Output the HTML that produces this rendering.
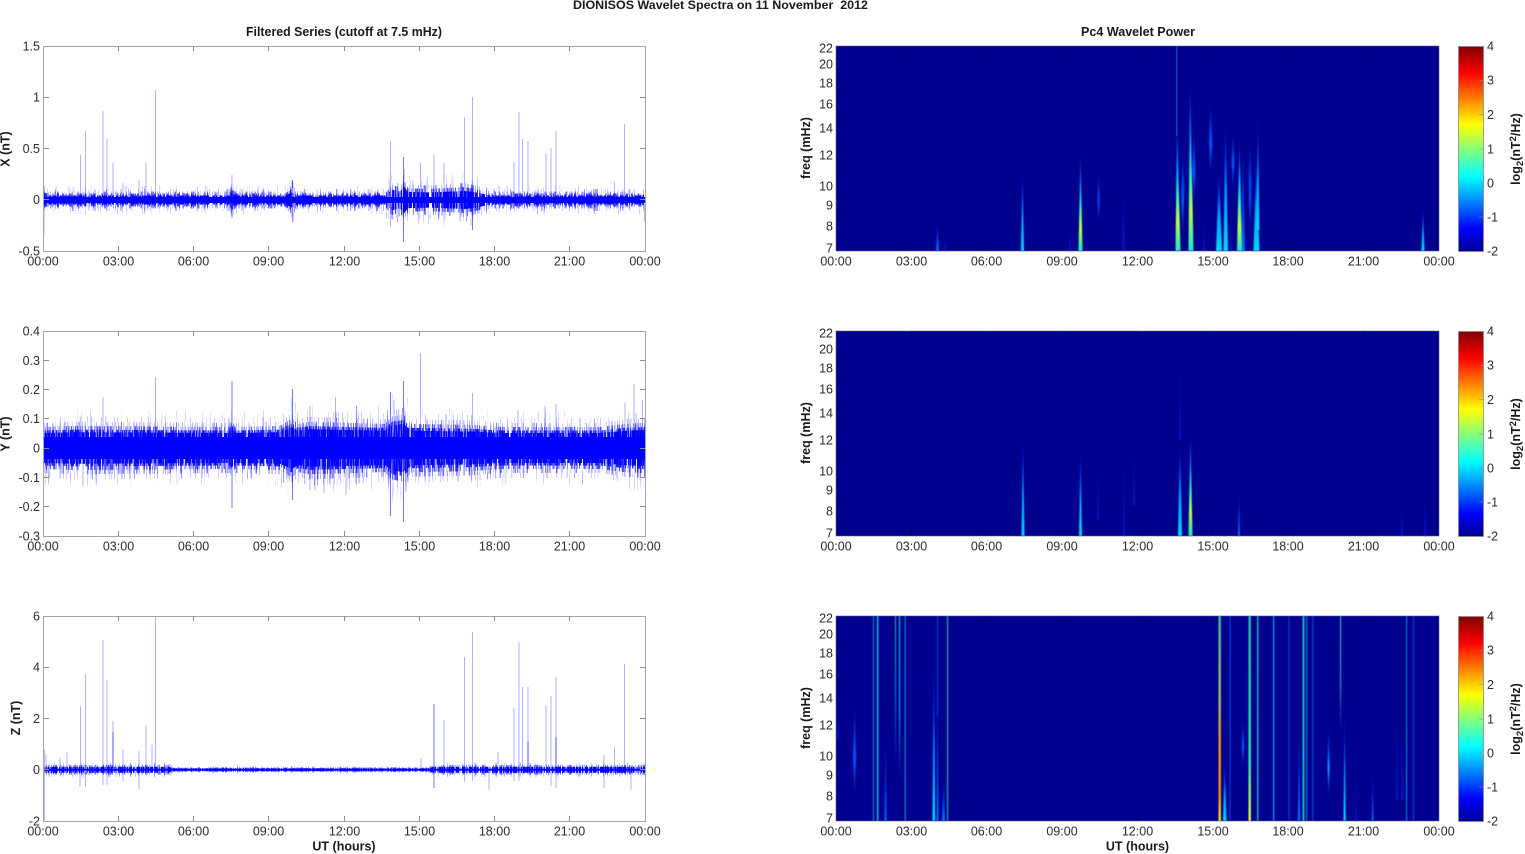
<!DOCTYPE html>
<html><head><meta charset="utf-8"><title>DIONISOS Wavelet Spectra</title>
<style>
html,body{margin:0;padding:0;background:#fff;width:1525px;height:854px;overflow:hidden}
svg{display:block;font-family:"Liberation Sans",Arial,sans-serif}
.t{font-size:12.5px;fill:#2c2c2c}
.b{font-size:12.5px;font-weight:bold;fill:#1a1a1a}
.box{fill:none;stroke:#a6a6a6;stroke-width:1}
.tick{stroke:#8c8c8c;stroke-width:1;fill:none}
.sp{stroke:#0000ff;stroke-opacity:.3;stroke-width:1;fill:none}
.sd{stroke:#0000ff;stroke-opacity:.55;stroke-width:1;fill:none}
</style></head><body>
<svg xmlns="http://www.w3.org/2000/svg" width="1525" height="854" viewBox="0 0 1525 854">
<defs>
<filter id="f1" x="0" y="0" width="1" height="1" color-interpolation-filters="sRGB"><feTurbulence type="fractalNoise" baseFrequency="0.85 0.012" numOctaves="2" seed="3"/><feColorMatrix type="matrix" values="0 0 0 0 0 0 0 0 0 0 0 0 0 0 0 14 0 0 0 -5.6"/><feComposite in="SourceGraphic" operator="in"/></filter>
<filter id="f2" x="0" y="0" width="1" height="1" color-interpolation-filters="sRGB"><feTurbulence type="fractalNoise" baseFrequency="0.75 0.012" numOctaves="2" seed="11"/><feColorMatrix type="matrix" values="0 0 0 0 0 0 0 0 0 0 0 0 0 0 0 14 0 0 0 -6.4"/><feComposite in="SourceGraphic" operator="in"/></filter>
<filter id="f3" x="0" y="0" width="1" height="1" color-interpolation-filters="sRGB"><feTurbulence type="fractalNoise" baseFrequency="0.9 0.012" numOctaves="2" seed="23"/><feColorMatrix type="matrix" values="0 0 0 0 0 0 0 0 0 0 0 0 0 0 0 14 0 0 0 -7.3"/><feComposite in="SourceGraphic" operator="in"/></filter>
<filter id="f4" x="0" y="0" width="1" height="1" color-interpolation-filters="sRGB"><feTurbulence type="fractalNoise" baseFrequency="0.8 0.012" numOctaves="2" seed="37"/><feColorMatrix type="matrix" values="0 0 0 0 0 0 0 0 0 0 0 0 0 0 0 14 0 0 0 -8.1"/><feComposite in="SourceGraphic" operator="in"/></filter>
<filter id="f5" x="0" y="0" width="1" height="1" color-interpolation-filters="sRGB"><feTurbulence type="fractalNoise" baseFrequency="0.7 0.012" numOctaves="2" seed="51"/><feColorMatrix type="matrix" values="0 0 0 0 0 0 0 0 0 0 0 0 0 0 0 14 0 0 0 -8.9"/><feComposite in="SourceGraphic" operator="in"/></filter>
<filter id="f6" x="0" y="0" width="1" height="1" color-interpolation-filters="sRGB"><feTurbulence type="fractalNoise" baseFrequency="0.85 0.012" numOctaves="2" seed="67"/><feColorMatrix type="matrix" values="0 0 0 0 0 0 0 0 0 0 0 0 0 0 0 14 0 0 0 -9.6"/><feComposite in="SourceGraphic" operator="in"/></filter>
<filter id="soft" x="-1%" y="-1%" width="102%" height="102%" color-interpolation-filters="sRGB"><feGaussianBlur stdDeviation="0.3"/></filter>
<filter id="hb" x="-2%" y="-2%" width="104%" height="104%" color-interpolation-filters="sRGB"><feGaussianBlur stdDeviation="0.65 0.5"/></filter>
<filter id="lb" x="-2%" y="-2%" width="104%" height="104%" color-interpolation-filters="sRGB"><feGaussianBlur stdDeviation="0.4 0"/></filter>
<linearGradient id="gA" x1="0" y1="1" x2="0" y2="0"><stop offset="0" stop-color="#18e8c0"/><stop offset=".22" stop-color="#b8ff48"/><stop offset=".42" stop-color="#30f0c0"/><stop offset=".65" stop-color="#0090ff"/><stop offset="1" stop-color="#00008f"/></linearGradient>
<linearGradient id="gB" x1="0" y1="1" x2="0" y2="0"><stop offset="0" stop-color="#00d8f8"/><stop offset=".45" stop-color="#0098ff"/><stop offset=".75" stop-color="#0030e8"/><stop offset="1" stop-color="#00008f"/></linearGradient>
<linearGradient id="gC" x1="0" y1="1" x2="0" y2="0"><stop offset="0" stop-color="#0070ff"/><stop offset=".5" stop-color="#0030e8"/><stop offset="1" stop-color="#00008f"/></linearGradient>
<linearGradient id="gD" x1="0" y1="1" x2="0" y2="0"><stop offset="0" stop-color="#0018c8"/><stop offset="1" stop-color="#00008f"/></linearGradient>
<linearGradient id="gMB" x1="0" y1="1" x2="0" y2="0"><stop offset="0" stop-color="#00008f"/><stop offset=".4" stop-color="#0098ff"/><stop offset=".7" stop-color="#0040e8"/><stop offset="1" stop-color="#00008f"/></linearGradient>
<linearGradient id="gMC" x1="0" y1="1" x2="0" y2="0"><stop offset="0" stop-color="#000090"/><stop offset=".4" stop-color="#0058ff"/><stop offset="1" stop-color="#00008f"/></linearGradient>
<linearGradient id="gO" x1="0" y1="1" x2="0" y2="0"><stop offset="0" stop-color="#f0f020"/><stop offset=".13" stop-color="#ff9000"/><stop offset=".35" stop-color="#ff9010"/><stop offset=".6" stop-color="#a8c060"/><stop offset="1" stop-color="#40c0a0"/></linearGradient>
<linearGradient id="gL" x1="0" y1="1" x2="0" y2="0"><stop offset="0" stop-color="#f0ff30"/><stop offset=".3" stop-color="#30e8b0"/><stop offset="1" stop-color="#28c0a0"/></linearGradient>
<linearGradient id="gF1" x1="0" y1="1" x2="0" y2="0"><stop offset="0" stop-color="#00008f"/><stop offset=".5" stop-color="#0088e0"/><stop offset="1" stop-color="#30b090"/></linearGradient>
<linearGradient id="gF2" x1="0" y1="1" x2="0" y2="0"><stop offset="0" stop-color="#00008f"/><stop offset=".4" stop-color="#18a8d8"/><stop offset="1" stop-color="#28c8a8"/></linearGradient>
<linearGradient id="jet" x1="0" y1="1" x2="0" y2="0"><stop offset="0" stop-color="#00008f"/><stop offset=".111" stop-color="#0000ff"/><stop offset=".365" stop-color="#00ffff"/><stop offset=".62" stop-color="#ffff00"/><stop offset=".87" stop-color="#ff0000"/><stop offset="1" stop-color="#800000"/></linearGradient>
<path id="eX" fill="#00f" d="M43 -1.2L48 -1L230 -1L232 -1.6L235 -1L285 -1L292 -1.7L298 -1L385 -1L392 -2.3L400 -1.9L404 -3L408 -1.8L430 -1.7L465 -2L478 -1.6L490 -1L640 -1L645 -1.3L645 1.3L640 1L490 1L478 1.6L465 2L430 1.7L408 1.8L404 3L400 1.9L392 2.3L385 1L298 1L292 1.7L285 1L235 1L232 1.6L230 1L48 1L43 1.2Z"/>
<path id="eY" fill="#00f" d="M43 -1L75 -1.05L230 -1L232 -1.3L235 -1L280 -1.05L292 -1.4L298 -1.15L310 -1.25L345 -1.2L385 -1.15L392 -1.5L403 -1.6L412 -1.15L470 -1.1L500 -1L600 -1L625 -1.15L645 -1.2L645 1.2L625 1.15L600 1L500 1L470 1.1L412 1.15L403 1.6L392 1.5L385 1.15L345 1.2L310 1.25L298 1.15L292 1.4L280 1.05L235 1L232 1.3L230 1L75 1.05L43 1Z"/>
<path id="eZ" fill="#00f" d="M43 -1L168 -1L174 -.5L428 -.5L434 -1L645 -1L645 1L434 1L428 .5L174 .5L168 1L43 1Z"/>
</defs>

<!-- titles -->
<text class="b" x="573" y="9" textLength="295" lengthAdjust="spacingAndGlyphs" style="font-size:11.5px">DIONISOS Wavelet Spectra on 11 November&#160;&#160;2012</text>
<text class="b" x="246" y="36" textLength="196" lengthAdjust="spacingAndGlyphs">Filtered Series (cutoff at 7.5 mHz)</text>
<text class="b" x="1081" y="36" textLength="114" lengthAdjust="spacingAndGlyphs">Pc4 Wavelet Power</text>

<g filter="url(#soft)">
<!-- ===== X panel ===== -->
<g filter="url(#f6)" opacity=".35"><use href="#eX" transform="translate(0 200) scale(1 14)"/></g>
<g filter="url(#f5)" opacity=".4"><use href="#eX" transform="translate(0 200) scale(1 11)"/></g>
<g filter="url(#f4)" opacity=".55"><use href="#eX" transform="translate(0 200) scale(1 8.500)"/></g>
<g filter="url(#f3)" opacity=".75"><use href="#eX" transform="translate(0 200) scale(1 6.500)"/></g>
<g filter="url(#f1)"><use href="#eX" transform="translate(0 200) scale(1 4.500)"/></g>
<rect x="43" y="197" width="602" height="6" fill="#00f"/>

<!-- ===== Y panel ===== -->
<g filter="url(#f6)" opacity=".35"><use href="#eY" transform="translate(0 448) scale(1 36)"/></g>
<g filter="url(#f5)" opacity=".4"><use href="#eY" transform="translate(0 448) scale(1 30)"/></g>
<g filter="url(#f4)" opacity=".5"><use href="#eY" transform="translate(0 448) scale(1 25)"/></g>
<g filter="url(#f3)" opacity=".65"><use href="#eY" transform="translate(0 448) scale(1 21)"/></g>
<g filter="url(#f2)" opacity=".85"><use href="#eY" transform="translate(0 448) scale(1 17.500)"/></g>
<g filter="url(#f1)"><use href="#eY" transform="translate(0 448) scale(1 15)"/></g>
<rect x="43" y="437" width="602" height="22" fill="#00f"/>

<!-- ===== Z panel ===== -->
<g filter="url(#f5)" opacity=".4"><use href="#eZ" transform="translate(0 769.700) scale(1 7)"/></g>
<g filter="url(#f3)" opacity=".6"><use href="#eZ" transform="translate(0 769.700) scale(1 4.800)"/></g>
<g filter="url(#f1)"><use href="#eZ" transform="translate(0 769.700) scale(1 3)"/></g>
<rect x="43" y="768.700" width="602" height="2" fill="#00f"/>
</g>

<!-- spikes -->
<path class="sp" d="M80.500 155V195M85.500 131V195M103 111V195M107 139V195M113 163V195M123 183V195M139 180V195M146 163V195M155.500 90V195M232 175V218M292.500 180V222M390.500 141V227M420.500 163V195M434 155V195M444 163V195M464.500 117V195M472.500 97V195M514 162V195M519 112V195M522.500 139V195M528 141V195M546 153V195M551 148V195M556 131V195M624.500 124V195M614.500 182V195M44 205V235"/>
<path class="sd" d="M403.500 157V242M472.500 205V230M44 186V195M645 205V222M292.500 180V188"/>
<path class="sp" d="M103 397V433M155.500 377V433M420.500 353V433M472.500 393V433M394 400V433M335.500 397V433M634 384V433M642.500 400V433M625 403V463M310 406V490M315 463V491M324 463V493M346 463V495M356.500 406V485M83 463V486M518 410V433M545 406V433M556 404V433"/>
<path class="sd" d="M232 381V508M292.500 389V500M403.500 381V522M390.500 392V516"/>
<path class="sp" d="M80.500 706V768M85.500 674V768M103 640V768M107 680V768M113 721V768M123 749V768M139 751V789M146 725V768M152 745V768M155.500 616V768M46 755V768M60 758V768M67 752V768M444 720V768M464.500 657V768M472.500 632V768M514 708V768M519 642V768M522.500 687V768M528 687V768M546 705V768M551 696V768M556 677V768M624.500 664V768M614.500 747V768M604 772V788M631 772V790M489 772V790M421 758V768M80 772V787M85.500 772V787M103 772V785M107 772V785M123 772V781M551 772V786M556 772V788M464.500 772V782M472.500 772V781M514 772V781M519 772V781M498 752V768M604 755V768"/>
<path class="sd" d="M44 750V820M434 704V788M113 732V768M528 742V768M556 737V768"/>

<!-- left axes boxes + ticks -->
<g id="L">
<rect class="box" x="43.5" y="46.5" width="602" height="205"/>
<rect class="box" x="43.5" y="331.5" width="602" height="205"/>
<rect class="box" x="43.5" y="616.5" width="602" height="205"/>
<path class="tick" d="M118.5 46v5M193.5 46v5M268.5 46v5M344.5 46v5M419.5 46v5M494.5 46v5M569.5 46v5M118.5 251v-5M193.5 251v-5M268.5 251v-5M344.5 251v-5M419.5 251v-5M494.5 251v-5M569.5 251v-5
M44 97.5h5M44 148.5h5M44 199.5h5M645 97.5h-5M645 148.5h-5M645 199.5h-5
M118.5 331v5M193.5 331v5M268.5 331v5M344.5 331v5M419.5 331v5M494.5 331v5M569.5 331v5M118.5 536v-5M193.5 536v-5M268.5 536v-5M344.5 536v-5M419.5 536v-5M494.5 536v-5M569.5 536v-5
M44 360.5h5M44 389.5h5M44 418.5h5M44 448.5h5M44 477.5h5M44 506.5h5M645 360.5h-5M645 389.5h-5M645 418.5h-5M645 448.5h-5M645 477.5h-5M645 506.5h-5
M118.5 616v5M193.5 616v5M268.5 616v5M344.5 616v5M419.5 616v5M494.5 616v5M569.5 616v5M118.5 821v-5M193.5 821v-5M268.5 821v-5M344.5 821v-5M419.5 821v-5M494.5 821v-5M569.5 821v-5
M44 667.5h5M44 718.5h5M44 769.5h5M645 667.5h-5M645 718.5h-5M645 769.5h-5"/>
</g>

<!-- left y labels -->
<g class="t" text-anchor="end">
<text x="40" y="50.500">1.5</text><text x="40" y="101.500">1</text><text x="40" y="153">0.5</text><text x="40" y="204">0</text><text x="40" y="255.500">-0.5</text>
<text x="40" y="335.500">0.4</text><text x="40" y="365">0.3</text><text x="40" y="394">0.2</text><text x="40" y="423">0.1</text><text x="40" y="452.500">0</text><text x="40" y="482">-0.1</text><text x="40" y="511">-0.2</text><text x="40" y="540.500">-0.3</text>
<text x="40" y="620.500">6</text><text x="40" y="671.500">4</text><text x="40" y="723">2</text><text x="40" y="774">0</text><text x="40" y="825.500">-2</text>
</g>
<!-- x labels left -->
<g class="t" text-anchor="middle">
<text x="43" y="265.500">00:00</text><text x="118.500" y="265.500">03:00</text><text x="193.500" y="265.500">06:00</text><text x="268.500" y="265.500">09:00</text><text x="344.500" y="265.500">12:00</text><text x="419.500" y="265.500">15:00</text><text x="494.500" y="265.500">18:00</text><text x="569.500" y="265.500">21:00</text><text x="645" y="265.500">00:00</text>
<text x="43" y="550.500">00:00</text><text x="118.500" y="550.500">03:00</text><text x="193.500" y="550.500">06:00</text><text x="268.500" y="550.500">09:00</text><text x="344.500" y="550.500">12:00</text><text x="419.500" y="550.500">15:00</text><text x="494.500" y="550.500">18:00</text><text x="569.500" y="550.500">21:00</text><text x="645" y="550.500">00:00</text>
<text x="43" y="835.500">00:00</text><text x="118.500" y="835.500">03:00</text><text x="193.500" y="835.500">06:00</text><text x="268.500" y="835.500">09:00</text><text x="344.500" y="835.500">12:00</text><text x="419.500" y="835.500">15:00</text><text x="494.500" y="835.500">18:00</text><text x="569.500" y="835.500">21:00</text><text x="645" y="835.500">00:00</text>
</g>
<text class="b" x="344" y="850.500" text-anchor="middle">UT (hours)</text>
<text class="b" x="1137.500" y="850.500" text-anchor="middle">UT (hours)</text>
<text class="b" text-anchor="middle" transform="translate(9.500 149) rotate(-90)">X (nT)</text>
<text class="b" text-anchor="middle" transform="translate(9.500 434) rotate(-90)">Y (nT)</text>
<text class="b" text-anchor="middle" transform="translate(20 718) rotate(-90)">Z (nT)</text>

<!-- ===== right panels background ===== -->
<rect x="836" y="46" width="603" height="205" fill="#00008f"/>
<rect x="836" y="331" width="603" height="205" fill="#00008f"/>
<rect x="836" y="616" width="603" height="205" fill="#00008f"/>

<!-- spectra 1 -->
<g filter="url(#hb)">
<g fill="url(#gD)"><polygon points="944,251 945,233 946,251"/><polygon points="1069,251 1070,226 1071,251"/><polygon points="1122,251 1123.500,183 1125,251"/><polygon points="1203,251 1204,213 1205,251"/><polygon points="1230,251 1231,205 1232,251"/></g>
<g fill="url(#gMC)"><polygon points="1098.700,225 1097.500,195 1098.700,173 1099.900,195"/><polygon points="1210.700,178 1209,140 1210.700,100 1212.400,140"/><polygon points="1182.700,240 1181,190 1182.700,147 1184.400,190"/><polygon points="1194,207 1192.500,170 1194,123 1195.500,170"/><polygon points="1233,190 1231.500,160 1233,130 1234.500,160"/><polygon points="1250,240 1248.600,180 1250,137 1251.400,180"/></g>
<g fill="url(#gC)"><polygon points="936,251 937.500,220 939,251"/><polygon points="1241.500,251 1243,140 1245,251"/></g>
<g fill="url(#gB)"><polygon points="1021,251 1022.500,167 1024,251"/><polygon points="1421.500,251 1423,207 1424.500,251"/><polygon points="1216,251 1219,170 1222,251"/><polygon points="1223.500,251 1225.500,117 1228,251"/><polygon points="1253.500,251 1256.500,157 1259.500,251"/><polygon points="1256.500,230 1258,113 1259.500,230"/></g>
<g fill="url(#gA)"><polygon points="1175.500,251 1177,120 1180.500,251"/><polygon points="1188.500,251 1190,77 1193.500,251"/><polygon points="1237,251 1239.500,137 1242,251"/><polygon points="1078.500,251 1080.500,150 1082.500,251"/></g>
</g>
<rect x="1176.200" y="46" width="1" height="90" fill="#0a80d8" filter="url(#lb)"/>

<!-- spectra 2 -->
<g filter="url(#hb)">
<g fill="url(#gD)"><polygon points="1179,440 1180,350 1181,440"/><polygon points="1097,520 1098,460 1099,520"/><polygon points="1123,536 1124,445 1125,536"/><polygon points="1133,505 1134,440 1135,505"/><polygon points="1401,536 1402,500 1403,536"/><polygon points="1424,536 1425,490 1426,536"/></g>
<g fill="url(#gC)"><polygon points="1238,536 1239,487 1240,536"/></g>
<g fill="url(#gB)"><polygon points="1021.500,536 1023,435 1024.500,536"/><polygon points="1079,536 1080.500,445 1082,536"/><polygon points="1178,536 1180,440 1182,536"/></g>
<g fill="url(#gA)"><polygon points="1188.500,536 1190.500,430 1192.500,536"/></g>
</g>

<!-- spectra 3 -->
<g filter="url(#hb)">
<g fill="url(#gD)"><polygon points="1396,800 1397,700 1398,800"/><polygon points="1401.500,800 1402.600,715 1403.700,800"/><polygon points="1355,821 1355.800,765 1356.600,821"/><polygon points="837,740 838,690 839,740"/></g>
<g fill="url(#gMC)"><polygon points="854.600,800 853,755 854.600,700 856.200,755"/><polygon points="1243,770 1241.800,745 1243,716 1244.200,745"/></g>
<g fill="url(#gMB)"><polygon points="1328.600,800 1327.400,765 1328.600,725 1329.800,765"/></g>
<g fill="url(#gC)"><polygon points="884.500,821 885.500,730 886.500,821"/><polygon points="936.500,821 937.500,680 938.500,821"/><polygon points="942,821 943.600,775 945,821"/><polygon points="1371.800,821 1372.700,770 1373.600,821"/><polygon points="1297.800,821 1299,716 1300.200,821"/></g>
<g fill="url(#gB)"><polygon points="932.500,821 933.800,660 935.200,821"/><polygon points="1223,821 1224.700,760 1226.500,821"/><polygon points="1343.500,821 1344.600,710 1345.800,821"/></g>
</g>
<g filter="url(#lb)">
<rect x="1229.500" y="616" width="1" height="205" fill="#0048e0"/>
<rect x="1288.500" y="616" width="1" height="205" fill="#0048e0"/>
<rect x="1312.300" y="616" width="1" height="205" fill="#0058e8"/>
<rect x="1413" y="616" width="1" height="205" fill="#0050e0"/>
<rect x="937" y="616" width="1" height="100" fill="#0040d8"/>
<rect x="873" y="616" width="1" height="205" fill="#1090d0"/>
<rect x="876.800" y="616" width="1.700" height="205" fill="#18a8d0"/>
<rect x="895" y="616" width="1" height="150" fill="url(#gF1)"/>
<rect x="899" y="616" width="1.100" height="160" fill="url(#gF2)"/>
<rect x="904.700" y="616" width="1" height="205" fill="#1098c8"/>
<rect x="947" y="616" width="1.100" height="205" fill="#20c0a0"/>
<rect x="1218.500" y="616" width="2.400" height="205" fill="url(#gO)"/>
<rect x="1248.500" y="616" width="2.400" height="205" fill="url(#gL)"/>
<rect x="1257" y="616" width="1.400" height="205" fill="#20b8b0"/>
<rect x="1273" y="616" width="1.300" height="205" fill="#1098e0"/>
<rect x="1302.500" y="616" width="2" height="205" fill="#20b8b8"/>
<rect x="1306" y="616" width="1.200" height="205" fill="#0880e0"/>
<rect x="1340" y="616" width="1.100" height="115" fill="url(#gF2)"/>
<rect x="1406" y="616" width="1.100" height="205" fill="#1088d0"/>
</g>

<!-- right boxes + ticks -->
<rect x="836" y="46" width="603" height="205" fill="none" stroke="#5a5a9a" stroke-width=".6"/>
<rect x="836" y="331" width="603" height="205" fill="none" stroke="#5a5a9a" stroke-width=".6"/>
<rect x="836" y="616" width="603" height="205" fill="none" stroke="#5a5a9a" stroke-width=".6"/>
<path stroke="#000" stroke-opacity=".35" stroke-width="1" fill="none" d="M911.500 46v5M986.500 46v5M1062 46v5M1137.500 46v5M1213 46v5M1288 46v5M1363.500 46v5M911.500 251v-5M986.500 251v-5M1062 251v-5M1137.500 251v-5M1213 251v-5M1288 251v-5M1363.500 251v-5
M911.500 331v5M986.500 331v5M1062 331v5M1137.500 331v5M1213 331v5M1288 331v5M1363.500 331v5M911.500 536v-5M986.500 536v-5M1062 536v-5M1137.500 536v-5M1213 536v-5M1288 536v-5M1363.500 536v-5
M911.500 616v5M986.500 616v5M1062 616v5M1137.500 616v5M1213 616v5M1288 616v5M1363.500 616v5M911.500 821v-5M986.500 821v-5M1062 821v-5M1137.500 821v-5M1213 821v-5M1288 821v-5M1363.500 821v-5"/>

<!-- freq labels -->
<g class="t" text-anchor="end">
<text x="833" y="52.500">22</text><text x="833" y="68.500">20</text><text x="833" y="87.500">18</text><text x="833" y="108.500">16</text><text x="833" y="132.500">14</text><text x="833" y="159.500">12</text><text x="833" y="190.500">10</text><text x="833" y="209.500">9</text><text x="833" y="230.500">8</text><text x="833" y="252.500">7</text>
<text x="833" y="337.500">22</text><text x="833" y="353.500">20</text><text x="833" y="372.500">18</text><text x="833" y="393.500">16</text><text x="833" y="417.500">14</text><text x="833" y="444.500">12</text><text x="833" y="475.500">10</text><text x="833" y="494.500">9</text><text x="833" y="515.500">8</text><text x="833" y="537.500">7</text>
<text x="833" y="622.500">22</text><text x="833" y="638.500">20</text><text x="833" y="657.500">18</text><text x="833" y="678.500">16</text><text x="833" y="702.500">14</text><text x="833" y="729.500">12</text><text x="833" y="760.500">10</text><text x="833" y="779.500">9</text><text x="833" y="800.500">8</text><text x="833" y="822.500">7</text>
</g>
<!-- right x labels -->
<g class="t" text-anchor="middle">
<text x="836" y="265.500">00:00</text><text x="911.500" y="265.500">03:00</text><text x="986.500" y="265.500">06:00</text><text x="1062" y="265.500">09:00</text><text x="1137.500" y="265.500">12:00</text><text x="1213" y="265.500">15:00</text><text x="1288" y="265.500">18:00</text><text x="1363.500" y="265.500">21:00</text><text x="1439" y="265.500">00:00</text>
<text x="836" y="550.500">00:00</text><text x="911.500" y="550.500">03:00</text><text x="986.500" y="550.500">06:00</text><text x="1062" y="550.500">09:00</text><text x="1137.500" y="550.500">12:00</text><text x="1213" y="550.500">15:00</text><text x="1288" y="550.500">18:00</text><text x="1363.500" y="550.500">21:00</text><text x="1439" y="550.500">00:00</text>
<text x="836" y="835.500">00:00</text><text x="911.500" y="835.500">03:00</text><text x="986.500" y="835.500">06:00</text><text x="1062" y="835.500">09:00</text><text x="1137.500" y="835.500">12:00</text><text x="1213" y="835.500">15:00</text><text x="1288" y="835.500">18:00</text><text x="1363.500" y="835.500">21:00</text><text x="1439" y="835.500">00:00</text>
</g>
<text class="b" text-anchor="middle" transform="translate(810 148) rotate(-90)">freq (mHz)</text>
<text class="b" text-anchor="middle" transform="translate(810 433) rotate(-90)">freq (mHz)</text>
<text class="b" text-anchor="middle" transform="translate(810 718) rotate(-90)">freq (mHz)</text>

<!-- colorbars -->
<rect x="1458.500" y="46.500" width="25" height="205" fill="url(#jet)" stroke="#8a8a8a" stroke-width=".8"/>
<rect x="1458.500" y="331.500" width="25" height="205" fill="url(#jet)" stroke="#8a8a8a" stroke-width=".8"/>
<rect x="1458.500" y="616.500" width="25" height="205" fill="url(#jet)" stroke="#8a8a8a" stroke-width=".8"/>
<path class="tick" stroke-opacity=".6" d="M1483 80.500h-4M1483 114.500h-4M1483 149h-4M1483 183h-4M1483 217h-4M1483 365.500h-4M1483 399.500h-4M1483 434h-4M1483 468h-4M1483 502h-4M1483 650.500h-4M1483 684.500h-4M1483 719h-4M1483 753h-4M1483 787h-4"/>
<g class="t">
<text x="1487" y="50.500">4</text><text x="1487" y="84.500">3</text><text x="1487" y="119">2</text><text x="1487" y="153.500">1</text><text x="1487" y="187.500">0</text><text x="1487" y="221.500">-1</text><text x="1487" y="255.500">-2</text>
<text x="1487" y="335.500">4</text><text x="1487" y="369.500">3</text><text x="1487" y="404">2</text><text x="1487" y="438.500">1</text><text x="1487" y="472.500">0</text><text x="1487" y="506.500">-1</text><text x="1487" y="540.500">-2</text>
<text x="1487" y="620.500">4</text><text x="1487" y="654.500">3</text><text x="1487" y="689">2</text><text x="1487" y="723.500">1</text><text x="1487" y="757.500">0</text><text x="1487" y="791.500">-1</text><text x="1487" y="825.500">-2</text>
</g>
<text class="b" text-anchor="middle" transform="translate(1520 149) rotate(-90)">log<tspan dy="3" font-size="9.500">2</tspan><tspan dy="-3">(nT</tspan><tspan dy="-4" font-size="9.500">2</tspan><tspan dy="4">/Hz)</tspan></text>
<text class="b" text-anchor="middle" transform="translate(1520 434) rotate(-90)">log<tspan dy="3" font-size="9.500">2</tspan><tspan dy="-3">(nT</tspan><tspan dy="-4" font-size="9.500">2</tspan><tspan dy="4">/Hz)</tspan></text>
<text class="b" text-anchor="middle" transform="translate(1520 719) rotate(-90)">log<tspan dy="3" font-size="9.500">2</tspan><tspan dy="-3">(nT</tspan><tspan dy="-4" font-size="9.500">2</tspan><tspan dy="4">/Hz)</tspan></text>
</svg>
</body></html>
